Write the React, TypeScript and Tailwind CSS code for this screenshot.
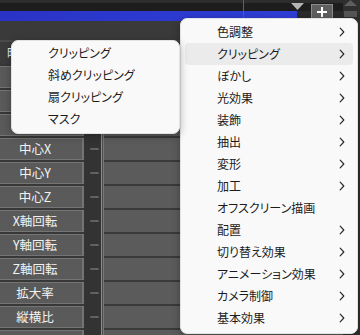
import React from "react";

const font = { fontFamily: '"Noto Sans CJK JP", "Noto Sans", sans-serif' };

const rightItems: { label: string; sub: boolean }[] = [
  { label: "色調整", sub: true },
  { label: "クリッピング", sub: true },
  { label: "ぼかし", sub: true },
  { label: "光効果", sub: true },
  { label: "装飾", sub: true },
  { label: "抽出", sub: true },
  { label: "変形", sub: true },
  { label: "加工", sub: true },
  { label: "オフスクリーン描画", sub: false },
  { label: "配置", sub: true },
  { label: "切り替え効果", sub: true },
  { label: "アニメーション効果", sub: true },
  { label: "カメラ制御", sub: true },
  { label: "基本効果", sub: true },
];

const leftItems = ["クリッピング", "斜めクリッピング", "扇クリッピング", "マスク"];

const rowLabels = ["X", "Y", "Z", "中心X", "中心Y", "中心Z", "X軸回転", "Y軸回転", "Z軸回転", "拡大率", "縦横比", ""];

function Chevron() {
  return (
    <svg width="6" height="10" viewBox="0 0 6 10" className="shrink-0">
      <path d="M1.2 1.2 L4.8 5 L1.2 8.8" fill="none" stroke="#2a2a2a" strokeWidth="1.2" strokeLinecap="round" strokeLinejoin="round" />
    </svg>
  );
}

function ParamRow({ label }: { label: string }) {
  return (
    <div className="flex h-[24px] shrink-0">
      <div className="flex w-[84px] flex-col">
        <div className="h-[2px] shrink-0 bg-[#383838]" />
        <div className="flex h-[22px] shrink-0 items-center justify-center border-y border-r-2 border-[#747474] bg-[#5a5a5a] pr-[12px] text-[12.5px] leading-none text-[#f2f2f2] [font-feature-settings:'palt']">
          {label}
        </div>
      </div>
      <div className="flex w-[17px] flex-col bg-[#333333]">
        <div className="h-[2px] shrink-0" />
        <div className="flex h-[22px] shrink-0 items-center pl-[6px]">
          <div className="h-[2px] w-[9px] rounded-full bg-[#626262]" />
        </div>
      </div>
      <div className="flex w-[3px]">
        <div className="w-[1px] bg-[#8a8a8a]" />
        <div className="w-[1px] bg-[#4e4e4e]" />
        <div className="w-[1px] bg-[#777777]" />
      </div>
      <div className="flex flex-1 flex-col">
        <div className="h-[2px] shrink-0 bg-[#3a3a3a]" />
        <div className="h-[22px] shrink-0 bg-[#5b5b5b]" />
      </div>
    </div>
  );
}

export default function App() {
  return (
    <div className="relative h-[335px] w-[360px] overflow-hidden bg-[#2c2c2c]" style={font}>
      <div className="flex h-full items-start">
        {/* main column */}
        <div className="flex flex-1 flex-col">
          <div className="h-[3px] shrink-0 bg-[#2e2e2e]" />
          <div className="h-[8px] shrink-0 bg-[#1d1d1d]" />
          <div className="flex h-[10px] shrink-0 bg-[#2a2a2a]">
            <div className="w-[297px] bg-gradient-to-r from-[#2a33c6] to-[#2f3fd8]" />
          </div>
          <div className="h-[19px] shrink-0 bg-[#3a3a3a]" />
          {/* header row */}
          <div className="flex h-[24px] shrink-0 flex-col">
            <div className="h-[2px] shrink-0 bg-[#4a4a4a]" />
            <div className="flex h-[22px] shrink-0 items-center bg-[#3b3b3b] pl-[7px] text-[12.5px] leading-none text-[#eeeeee]">
              時間制御
            </div>
          </div>
          {rowLabels.map((l, i) => (
            <ParamRow key={i} label={l} />
          ))}
        </div>
        {/* scrollbar column */}
        <div className="flex h-full w-[17px] flex-col items-center bg-[#2f2f2f]">
          <svg width="13" height="6" viewBox="0 0 13 6" className="ml-[-3px]">
            <path d="M0 6 L6.5 0 L13 6 Z" fill="#5e5e5e" />
          </svg>
          <div className="mt-[5px] ml-[-3px] h-[6px] w-[13px] bg-[#565656]" />
        </div>
      </div>

      {/* overlays on the timeline header */}
      <div className="absolute left-[243px] top-0 h-[21px] w-[1px] bg-[#c0392b]" />
      <svg className="absolute left-[291px] top-[3px]" width="13" height="7" viewBox="0 0 13 7">
        <path d="M0 0 L13 0 L6.5 7 Z" fill="#b5b5b5" />
      </svg>
      <div className="absolute left-[311px] top-[4px] flex h-[16px] w-[22px] items-center justify-center border border-[#8c8c8c] bg-[#5f5f5f]">
        <svg width="10" height="10" viewBox="0 0 10 10">
          <path d="M5 0 V10 M0 5 H10" stroke="#ffffff" strokeWidth="2" />
        </svg>
      </div>

      {/* right (main) context menu */}
      <div className="absolute left-[180px] top-[18px] w-[178px] rounded-[7px] border border-[#e2e2e2] bg-[#f9f9f9] pb-[4px] pt-[2px] shadow-[0_2px_8px_rgba(0,0,0,0.3)]">
        {rightItems.map((it, i) => (
          <div
            key={it.label}
            className={`mx-[4px] flex h-[22px] items-center rounded-[4px] pl-[32px] pr-[8px] text-[12px] leading-none text-[#1b1b1b] [font-feature-settings:'palt'] ${
              i === 1 ? "bg-[#ebebeb]" : ""
            }`}
          >
            <span className="flex-1">{it.label}</span>
            {it.sub && <Chevron />}
          </div>
        ))}
      </div>

      {/* left submenu */}
      <div className="absolute left-[11px] top-[40px] w-[169px] rounded-[7px] border border-[#e2e2e2] bg-[#f9f9f9] pb-[3px] pt-[1px] shadow-[0_2px_8px_rgba(0,0,0,0.3)]">
        {leftItems.map((l) => (
          <div
            key={l}
            className="flex h-[22px] items-center pl-[36px] text-[12px] leading-none text-[#1b1b1b] [font-feature-settings:'palt']"
          >
            {l}
          </div>
        ))}
      </div>
    </div>
  );
}
